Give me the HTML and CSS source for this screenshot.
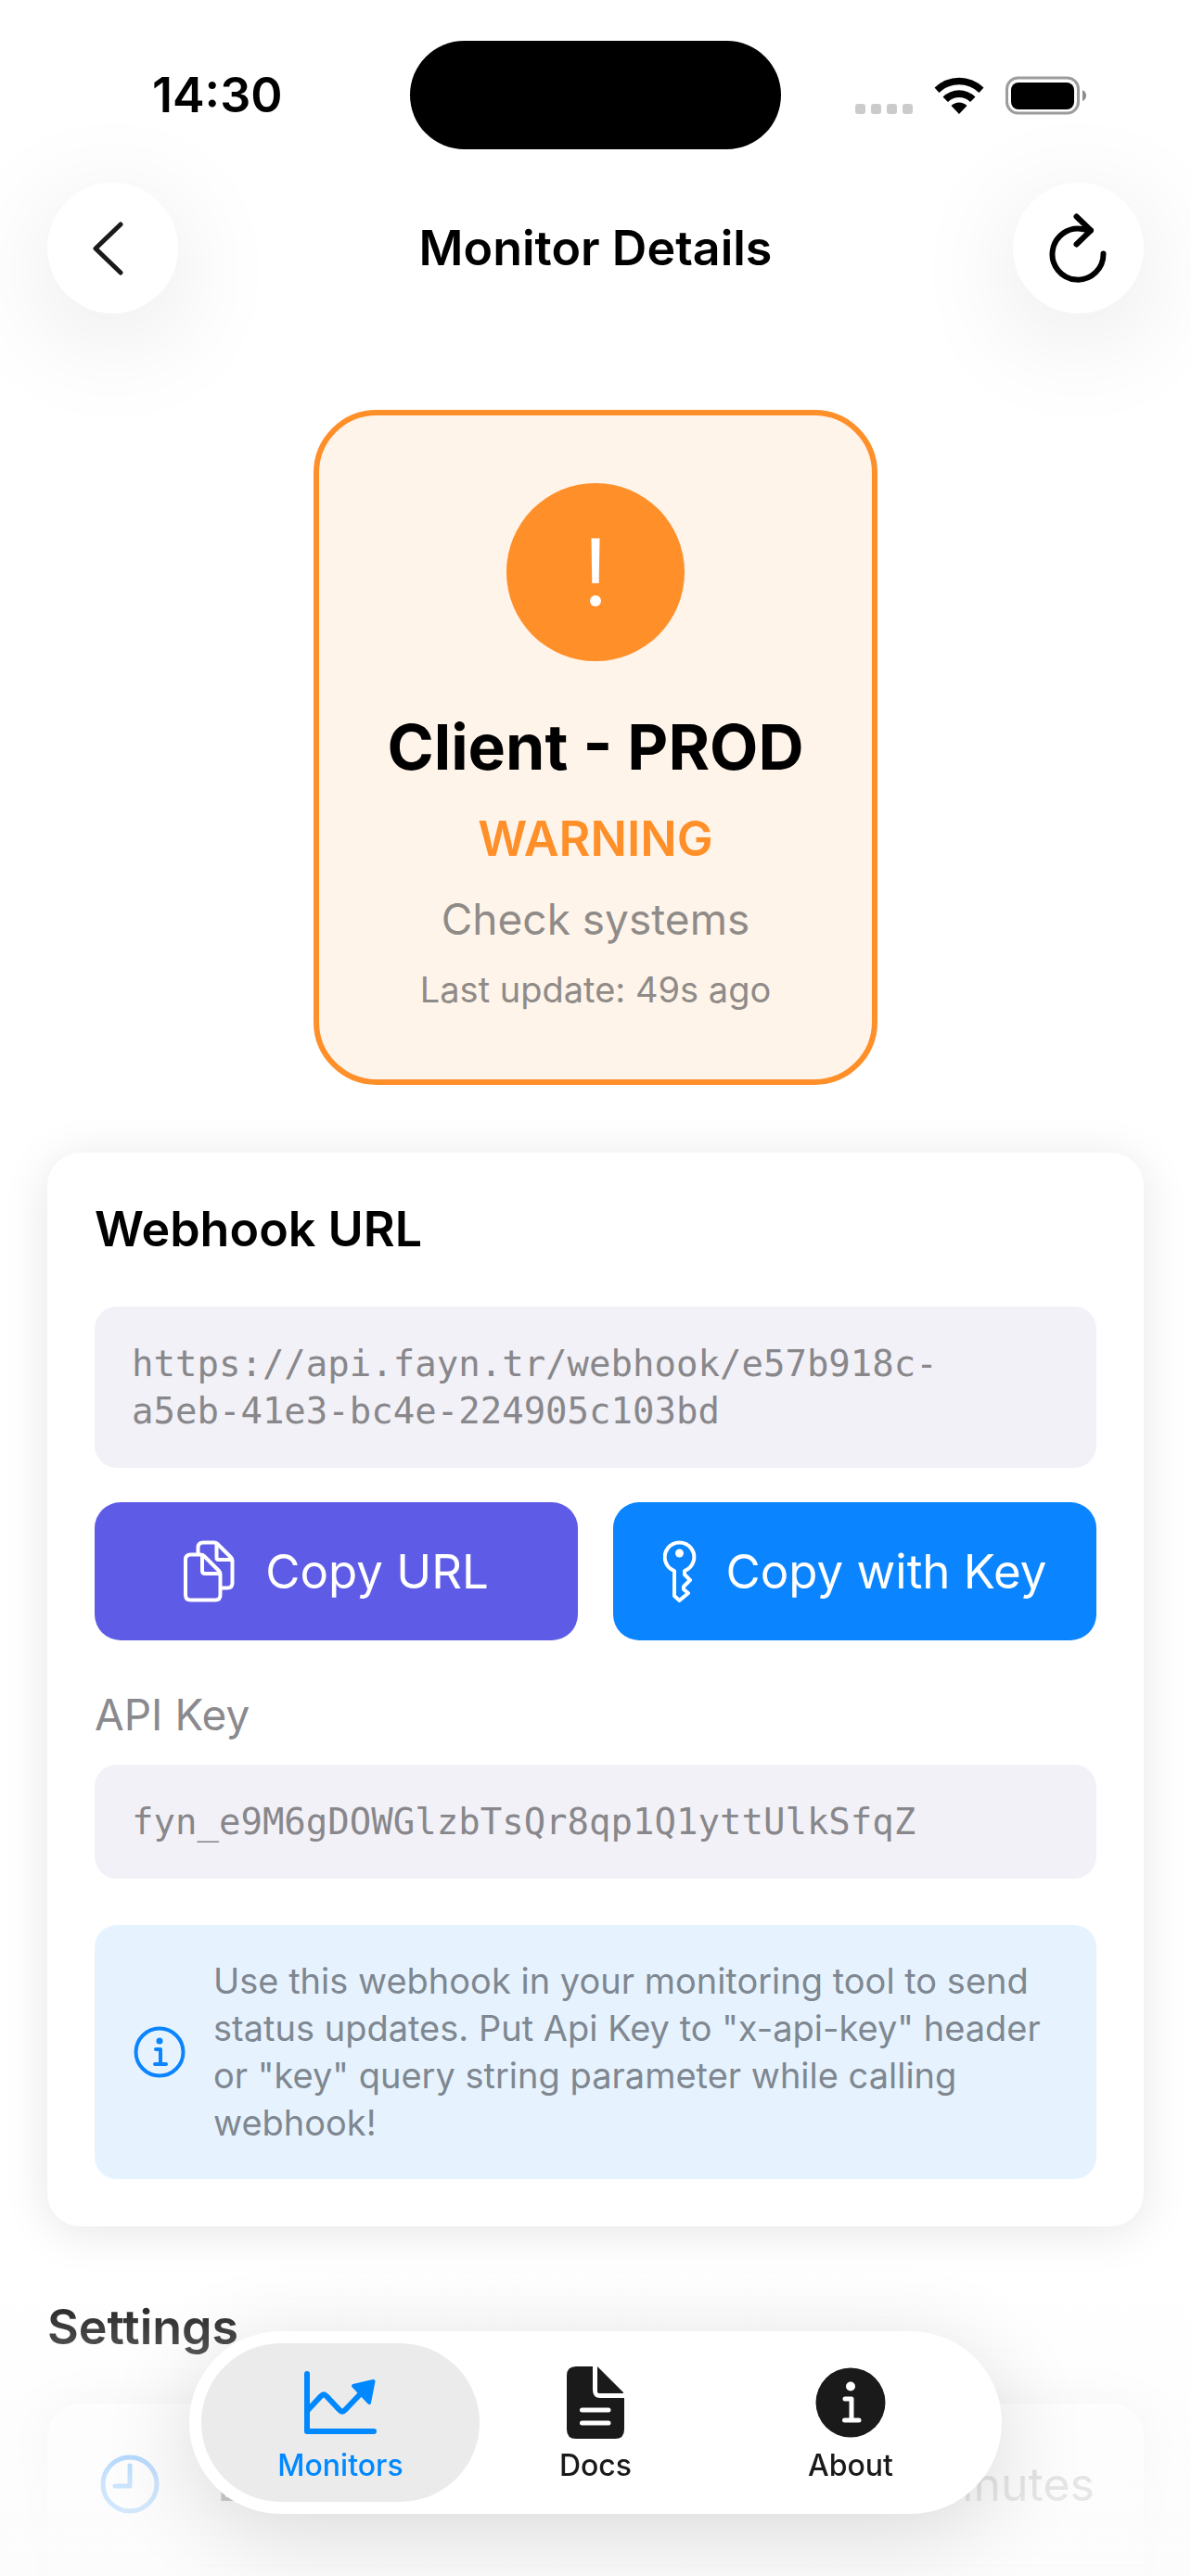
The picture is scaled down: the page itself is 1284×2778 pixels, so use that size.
FILE: index.html
```
<!DOCTYPE html>
<html lang="en">
<head>
  <meta charset="UTF-8">
  <meta name="viewport" content="width=device-width, initial-scale=1.0">
  <title>Monitor Details</title>
  <link rel="stylesheet" href="styles.css">
</head>
<body>
<div class="screen">

  <div class="statusbar">
    <span class="time">14:30</span>
    <span class="island"></span>
    <div class="indicators">
      <svg width="62" height="42" viewBox="0 0 62 42" fill="#cbcbcb">
        <rect x="0" y="30" width="11" height="11" rx="3"/>
        <rect x="17" y="30" width="11" height="11" rx="3"/>
        <rect x="34" y="30" width="11" height="11" rx="3"/>
        <rect x="51" y="30" width="11" height="11" rx="3"/>
      </svg>
      <svg width="54" height="42" viewBox="0 0 54 42">
        <path d="M0.5 12.5 A38 38 0 0 1 53.5 12.5 L48.5 18 A31 31 0 0 0 5.5 18 Z"/>
        <path d="M9.5 22.5 A25 25 0 0 1 44.5 22.5 L39 28 A17 17 0 0 0 15 28 Z"/>
        <path d="M18.5 32 A12 12 0 0 1 35.5 32 L27 41 Z"/>
      </svg>
      <svg width="87" height="42" viewBox="0 0 87 42">
        <rect x="1.5" y="2" width="77" height="38" rx="12" fill="none" stroke="#9c9c9c" stroke-width="3"/>
        <rect x="6" y="7" width="68" height="29" rx="8"/>
        <path d="M83 15 Q87 17 87 21 Q87 25 83 27 Z" fill="#8c8c8c"/>
      </svg>
    </div>
  </div>

  <header class="navbar">
    <button class="round" aria-label="Back">
      <svg width="70" height="80" viewBox="0 0 70 80" fill="none" stroke="#1a1a1a" stroke-width="5" stroke-linecap="round" stroke-linejoin="round">
        <path d="M43 14 L16 40 L43 66"/>
      </svg>
    </button>
    <h1 class="navtitle">Monitor Details</h1>
    <button class="round" aria-label="Refresh">
      <svg width="70" height="80" viewBox="0 0 70 80" fill="none" stroke="#000" stroke-width="6" stroke-linecap="round" stroke-linejoin="round">
        <path d="M62.5 45.5 A27.5 27.5 0 1 1 41 19.3 L49 20.5"/>
        <path d="M33.5 5.5 L49 20.5 L33.5 35.5"/>
      </svg>
    </button>
  </header>

  <main class="content">
    <section class="status">
      <svg class="statusicon" width="192" height="192" viewBox="0 0 192 192">
        <circle cx="96" cy="96" r="96" fill="#ff8f29"/>
        <path d="M91.5 59.5 H100.5 L99.7 108 H92.3 Z" fill="#fff"/>
        <circle cx="96" cy="127" r="6" fill="#fff"/>
      </svg>
      <h2 class="monitor">Client - PROD</h2>
      <p class="level">WARNING</p>
      <p class="message">Check systems</p>
      <p class="updated">Last update: 49s ago</p>
    </section>

    <section class="card webhook">
      <h2 class="heading">Webhook URL</h2>
      <p class="code">https://api.fayn.tr/webhook/e57b918c-<br>a5eb-41e3-bc4e-224905c103bd</p>
      <div class="actions">
        <button class="copy">
          <svg width="56" height="68" viewBox="0 0 56 68" fill="none" stroke="#fff" stroke-width="4" stroke-linejoin="round">
            <path d="M15.5 14 V8 Q15.5 2.5 21 2.5 H33 Q35 2.5 36.5 4 L51 18.5 Q52.5 20 52.5 22 V46 Q52.5 51.5 47 51.5 H40"/>
            <path d="M35.5 4 V19 Q35.5 21 37.5 21 H52"/>
            <path d="M7.5 15.5 H18 Q20.5 15.5 22 17 L38 33 Q39.5 34.5 39.5 37 V59 Q39.5 64.5 34 64.5 H7.5 Q2 64.5 2 59 V21 Q2 15.5 7.5 15.5 Z"/>
            <path d="M20 16 V33 Q20 36 23 36 H39"/>
          </svg>
          Copy URL
        </button>
        <button class="copy withkey">
          <svg width="36" height="68" viewBox="0 0 36 68" fill="none" stroke="#fff" stroke-width="4" stroke-linejoin="round">
            <path d="M12 33 A15.8 15.8 0 1 1 23 33 V37 L29 43 L22 50 V53 L27 57 L17.5 65 L12 60 Z"/>
            <circle cx="17.5" cy="14" r="4.5" fill="#fff" stroke="none"/>
          </svg>
          Copy with Key
        </button>
      </div>
      <p class="label">API Key</p>
      <p class="code">fyn_e9M6gDOWGlzbTsQr8qp1Q1yttUlkSfqZ</p>
      <div class="info">
        <svg class="infoicon" width="56" height="56" viewBox="0 0 56 56" fill="none" stroke="#0a84ff" stroke-width="4" stroke-linecap="round" stroke-linejoin="round">
          <circle cx="28" cy="28" r="25.5"/>
          <circle cx="28" cy="16" r="3.5" fill="#0a84ff" stroke="none"/>
          <path d="M24 25 H29 V41 M23 41 H35"/>
        </svg>
        <p>Use this webhook in your monitoring tool to send status updates. Put Api Key to "x-api-key" header or "key" query string parameter while calling webhook!</p>
      </div>
    </section>

    <h2 class="heading settings">Settings</h2>
    <section class="card">
      <div class="row">
        <svg width="64" height="64" viewBox="0 0 64 64" fill="none" stroke="#0a84ff" stroke-width="5" stroke-linecap="round" stroke-linejoin="round">
          <circle cx="32" cy="32" r="29"/>
          <path d="M32 12 V34 H16"/>
        </svg>
        <span>Expiry Time</span>
        <span class="value">10 minutes</span>
      </div>
      <div class="row"></div>
    </section>
  </main>

  <div class="fade"></div>

  <nav class="tabbar">
    <a class="tab active" href="#monitors">
      <svg width="80" height="80" viewBox="0 0 80 80" fill="none" stroke="#0088ff" stroke-width="6" stroke-linecap="round" stroke-linejoin="round">
        <path d="M4 9 V71 H76"/>
        <path d="M5 48 L19 33 Q22 30 25 33 L39 48 Q42 51 45 48 L64 28"/>
        <path d="M54 22 L75.5 17 L71 40 Z" fill="#0088ff" stroke-width="4"/>
      </svg>
      Monitors
    </a>
    <a class="tab" href="#docs">
      <svg width="80" height="80" viewBox="0 0 80 80" fill="#1a1a1a">
        <path d="M19 1 H37 V26 Q37 35 45 35 H71 V69 Q71 79 61 79 H19 Q9 79 9 69 V11 Q9 1 19 1 Z"/>
        <path d="M42 1 L70 29 V30 H44 Q42 30 42 28 Z"/>
        <path d="M25.5 48 H54 M25.5 62 H54" stroke="#fff" stroke-width="5" stroke-linecap="round"/>
      </svg>
      Docs
    </a>
    <a class="tab" href="#about">
      <svg width="80" height="80" viewBox="0 0 80 80">
        <circle cx="40" cy="40" r="37.5" fill="#1a1a1a"/>
        <circle cx="40" cy="22.5" r="5" fill="#fff"/>
        <path d="M34 36 H41 V59 M33.5 59 H49" fill="none" stroke="#fff" stroke-width="5" stroke-linecap="round" stroke-linejoin="round"/>
      </svg>
      About
    </a>
  </nav>

</div>
</body>
</html>
```
FILE: styles.css
```
* {
  box-sizing: border-box;
}
body, h1, h2, p {
  margin: 0;
}
body {
  background-color: #fff;
  color: #000;
  font-family: Inter, "Liberation Sans", sans-serif;
  font-size: 46px;
}
button {
  border: none;
  font-family: inherit;
  cursor: pointer;
}
svg {
  display: block;
  flex: none;
}
.screen {
  height: 100vh;
  overflow: hidden;
}

/* top of the phone */
.statusbar {
  display: grid;
  grid-template-columns: 1fr 400px 1fr;
  align-items: center;
  padding-top: 44px;
}
.time {
  padding-left: 164px;
  font-size: 52px;
  font-weight: 600;
}
.island {
  height: 117px;
  border-radius: 59px;
  background-color: #000;
}
.indicators {
  display: flex;
  justify-content: flex-end;
  gap: 23px;
  padding-right: 113px;
}
.navbar {
  display: flex;
  justify-content: space-between;
  align-items: center;
  padding: 36px 51px 0;
}
.round {
  display: flex;
  align-items: center;
  justify-content: center;
  width: 141px;
  height: 141px;
  padding: 0;
  border-radius: 50%;
  background-color: #fff;
  box-shadow: 0 24px 120px rgba(0, 0, 0, 0.1);
}
.navtitle {
  font-size: 52px;
  font-weight: 600;
}

.content {
  padding: 104px 51px 0;
}
.status {
  display: flex;
  flex-direction: column;
  align-items: center;
  width: fit-content;
  min-width: 608px;
  margin: 0 auto;
  padding: 73px;
  border: 6px solid #ff8f29;
  border-radius: 68px;
  background-color: #fff4ea;
  text-align: center;
}
.monitor {
  margin-top: 50px;
  font-size: 68px;
  font-weight: 700;
  line-height: 84px;
}
.level {
  margin-top: 28px;
  color: #ff8f29;
  font-size: 52px;
  font-weight: 600;
  line-height: 60px;
}
.message {
  margin-top: 28px;
  color: #8f8b88;
  line-height: 56px;
}
.updated {
  margin-top: 24px;
  color: #8f8b88;
  font-size: 38px;
  line-height: 48px;
}

.card {
  border-radius: 36px;
  background-color: #fff;
  box-shadow: 0 6px 50px rgba(0, 0, 0, 0.1);
}
.webhook {
  margin-top: 73px;
  padding: 51px;
}
.heading {
  font-size: 52px;
  font-weight: 600;
  line-height: 64px;
}
.code {
  padding: 36px 40px;
  border-radius: 24px;
  background-color: #f2f1f7;
  color: #88878b;
  font-family: "DejaVu Sans Mono", monospace;
  font-size: 39px;
  line-height: 51px;
}
.heading + .code {
  margin-top: 51px;
}
.actions {
  display: grid;
  grid-template-columns: 1fr 1fr;
  gap: 38px;
  margin-top: 37px;
}
.copy {
  display: flex;
  align-items: center;
  justify-content: center;
  gap: 32px;
  height: 149px;
  border-radius: 28px;
  background-color: #5e5ce6;
  color: #fff;
  font-size: 51px;
}
.withkey {
  background-color: #0a84ff;
}
.label {
  margin: 51px 0 25px;
  color: #8a8a8e;
  line-height: 58px;
}
.info {
  display: flex;
  align-items: center;
  gap: 30px;
  margin-top: 50px;
  padding: 35px 42px;
  border-radius: 24px;
  background-color: #e6f3ff;
  color: #7f8790;
  font-size: 38px;
  line-height: 51px;
}
.settings {
  margin: 77px 0 50px;
}
.row {
  display: flex;
  align-items: center;
  gap: 62px;
  height: 174px;
  padding: 0 53px 0 57px;
  font-size: 50px;
}
.row + .row {
  margin-left: 166px;
  border-top: 2px solid #ddd;
}
.value {
  margin-left: auto;
  color: #8a8a8e;
}

/* content fades out under the tab bar */
.fade {
  position: fixed;
  right: 0;
  bottom: 0;
  left: 0;
  height: 340px;
  background: linear-gradient(rgba(252, 252, 252, 0), rgba(252, 252, 252, 0.8) 70%, rgba(252, 252, 252, 0.9));
}
.tabbar {
  position: fixed;
  bottom: 67px;
  left: 50%;
  display: flex;
  padding: 13px;
  border-radius: 99px;
  background-color: #fff;
  box-shadow: 0 20px 100px rgba(0, 0, 0, 0.14);
  transform: translateX(-50%);
}
.tab {
  display: flex;
  flex-direction: column;
  align-items: center;
  gap: 8px;
  width: 300px;
  height: 171px;
  padding-top: 24px;
  border-radius: 86px;
  color: #1a1a1a;
  font-size: 32px;
  font-weight: 500;
  line-height: 40px;
  text-decoration: none;
}
.tab + .tab {
  margin-left: -25px;
}
.active {
  background-color: #ebebeb;
  color: #0088ff;
}
```
